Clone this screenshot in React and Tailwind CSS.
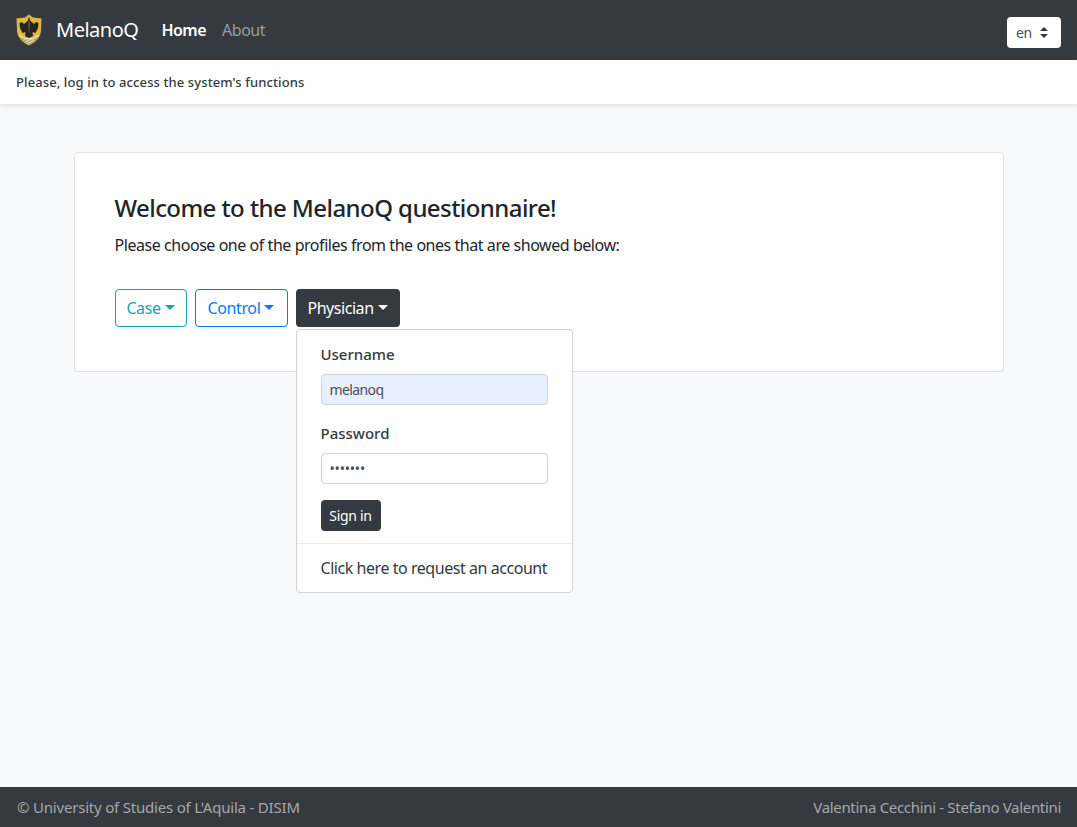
import React from "react";

const FONT = { fontFamily: '"Noto Sans", "Open Sans", sans-serif' };

function Caret() {
  return (
    <span className="ml-[4px] inline-block align-[4px] border-x-[5px] border-t-[5px] border-x-transparent border-t-current" />
  );
}

function Crest() {
  return (
    <svg width="26" height="32" viewBox="0 0 26 32" className="shrink-0">
      <path d="M13 0.5 L17 3.5 L25.5 4.5 L25 17 C24.5 24 19 28.5 13 31.5 C7 28.5 1.5 24 1 17 L0.5 4.5 L9 3.5 Z" fill="#e3b83d" />
      <path d="M3 20 C6 24 9 26 13 27 C17 26 20 24 23 20 L20 26 L13 31 L6 26 Z" fill="#a9a06f" />
      <path d="M3.5 21 C8 25 10 25.5 13 24 C16 25.5 18 25 22.5 21" fill="none" stroke="#e6e1c8" strokeWidth="1.3" />
      <path d="M9 28 L15 25 M11 30 L18 26" stroke="#e6e1c8" strokeWidth="1" />
      <path d="M13 3 L14.5 7 L18 10 L20 8 L22.5 9 L22 14 L19.5 19 L16.5 18 L17 22 L13 24 L9 22 L9.5 18 L6.5 19 L4 14 L3.5 9 L6 8 L8 10 L11.5 7 Z" fill="#26261f" />
      <path d="M13 5 L14 10 L13 21 L12 10 Z" fill="#5c584c" />
    </svg>
  );
}

export default function App() {
  return (
    <div className="min-h-screen flex flex-col bg-[#f8f9fa] text-[#212529]" style={FONT}>
      <nav className="h-[60px] shrink-0 bg-[#343a40] flex items-center pl-4 pr-4">
        <Crest />
        <span className="ml-[14px] text-[20px] text-white tracking-[-0.5px]">MelanoQ</span>
        <span className="ml-[23px] text-[16px] font-semibold text-white tracking-[-0.5px]">Home</span>
        <span className="ml-4 text-[16px] text-[#9a9da0] tracking-[-0.5px]">About</span>
        <div className="ml-auto self-start mt-[17px] w-[54px] h-[31px] bg-white rounded flex items-center pl-[9px] gap-[8px] text-[14px] text-[#495057]">
          <span className="tracking-[-0.3px]">en</span>
          <svg width="8" height="11" viewBox="0 0 8 11" fill="#343a40">
            <path d="M4 0 L8 4 H0 Z M0 7 H8 L4 11 Z" />
          </svg>
        </div>
      </nav>

      <div className="h-11 shrink-0 bg-white shadow-[0_2px_4px_rgba(0,0,0,0.1)] flex items-center px-4 pt-[2px] text-[13px] font-medium text-[#343a40] tracking-[0.1px]">
        Please, log in to access the system's functions
      </div>

      <main className="flex-1 pt-12">
        <div className="mx-auto w-[930px] h-[220px] bg-white border border-[#dfdfdf] rounded px-10 pt-[37px]">
          <h1 className="text-[24px] leading-9 font-medium tracking-[-0.57px]">Welcome to the MelanoQ questionnaire!</h1>
          <p className="mt-[7px] text-[16px] leading-6 tracking-[-0.45px]">
            Please choose one of the profiles from the ones that are showed below:
          </p>
          <div className="mt-[32px] flex gap-2">
            <button className="h-[38px] w-[72px] border border-[#17a2b8] rounded text-[#17a2b8] text-[16px] tracking-[-0.4px]">
              Case<Caret />
            </button>
            <button className="h-[38px] w-[93px] border border-[#007bff] rounded text-[#007bff] text-[16px] tracking-[-0.4px]">
              Control<Caret />
            </button>
            <div className="relative">
              <button className="h-[38px] w-[104px] bg-[#343a40] rounded text-white text-[16px] tracking-[-0.45px]">
                Physician<Caret />
              </button>
              <div className="absolute left-0 top-[40px] w-[277px] h-[264px] bg-white border border-[#d2d3d4] rounded z-10">
                <div className="px-6 pt-[12px]">
                  <label className="block text-[15px] leading-6 font-medium text-[#343a40] tracking-[0px]">Username</label>
                  <div className="mt-2 h-[31px] bg-[#e8f0fe] border border-[#ced4da] rounded px-2 flex items-center text-[14px] text-[#495057] tracking-[-0.6px]">
                    melanoq
                  </div>
                  <label className="block mt-4 text-[15px] leading-6 font-medium text-[#343a40] tracking-[0px]">Password</label>
                  <div className="mt-2 h-[31px] bg-white border border-[#ced4da] rounded px-2 flex items-center text-[14px] text-[#495057] tracking-[-0.2px]">
                    •••••••
                  </div>
                  <button className="mt-4 h-[31px] w-[60px] bg-[#343a40] rounded text-white text-[14px] tracking-[-0.3px]">Sign in</button>
                </div>
                <div className="mt-3 border-t border-[#e9ecef] px-6 pt-[12px] text-[16px] leading-6 text-[#343a40] tracking-[-0.45px]">
                  Click here to request an account
                </div>
              </div>
            </div>
          </div>
        </div>
      </main>

      <footer className="h-10 shrink-0 bg-[#343a40] flex items-center justify-between pl-[17px] pr-4 text-[15px] text-[#a5a8aa]">
        <span className="tracking-[-0.2px]">© University of Studies of L'Aquila - DISIM</span>
        <span className="tracking-[-0.32px]">Valentina Cecchini - Stefano Valentini</span>
      </footer>
    </div>
  );
}
